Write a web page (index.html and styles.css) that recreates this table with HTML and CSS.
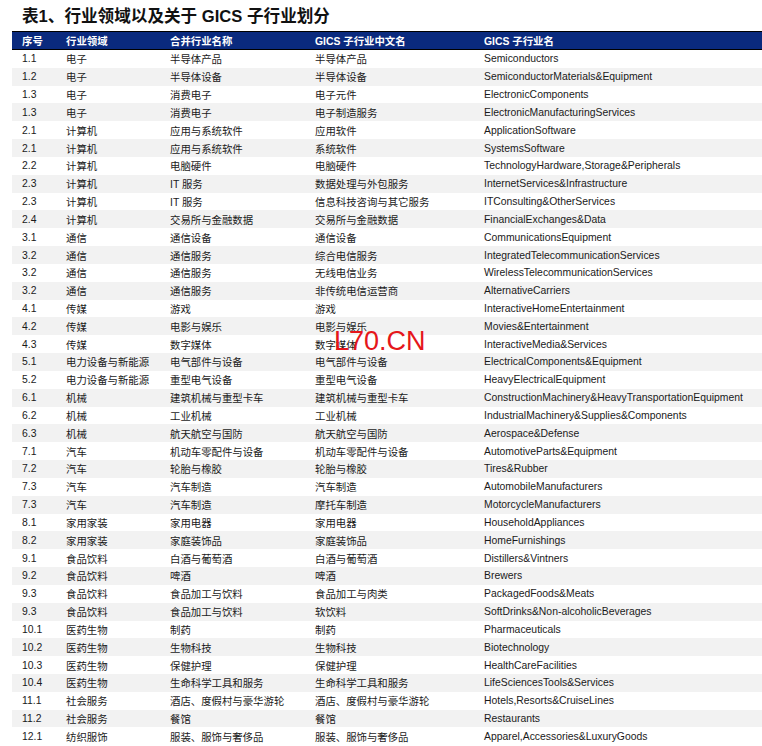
FILE: index.html
```html
<!DOCTYPE html>
<html lang="zh">
<head>
<meta charset="utf-8">
<link rel="stylesheet" href="styles.css">
</head>
<body>
<h1 class="title">表1、行业领域以及关于 GICS 子行业划分</h1>
<table class="tbl">
<colgroup><col class="c1"><col class="c2"><col class="c3"><col class="c4"><col class="c5"></colgroup>
<thead><tr><th>序号</th><th>行业领域</th><th>合并行业名称</th><th>GICS 子行业中文名</th><th>GICS 子行业名</th></tr></thead>
<tbody>
<tr><td>1.1</td><td>电子</td><td>半导体产品</td><td>半导体产品</td><td>Semiconductors</td></tr>
<tr><td>1.2</td><td>电子</td><td>半导体设备</td><td>半导体设备</td><td>SemiconductorMaterials&amp;Equipment</td></tr>
<tr><td>1.3</td><td>电子</td><td>消费电子</td><td>电子元件</td><td>ElectronicComponents</td></tr>
<tr><td>1.3</td><td>电子</td><td>消费电子</td><td>电子制造服务</td><td>ElectronicManufacturingServices</td></tr>
<tr><td>2.1</td><td>计算机</td><td>应用与系统软件</td><td>应用软件</td><td>ApplicationSoftware</td></tr>
<tr><td>2.1</td><td>计算机</td><td>应用与系统软件</td><td>系统软件</td><td>SystemsSoftware</td></tr>
<tr><td>2.2</td><td>计算机</td><td>电脑硬件</td><td>电脑硬件</td><td>TechnologyHardware,Storage&amp;Peripherals</td></tr>
<tr><td>2.3</td><td>计算机</td><td>IT 服务</td><td>数据处理与外包服务</td><td>InternetServices&amp;Infrastructure</td></tr>
<tr><td>2.3</td><td>计算机</td><td>IT 服务</td><td>信息科技咨询与其它服务</td><td>ITConsulting&amp;OtherServices</td></tr>
<tr><td>2.4</td><td>计算机</td><td>交易所与金融数据</td><td>交易所与金融数据</td><td>FinancialExchanges&amp;Data</td></tr>
<tr><td>3.1</td><td>通信</td><td>通信设备</td><td>通信设备</td><td>CommunicationsEquipment</td></tr>
<tr><td>3.2</td><td>通信</td><td>通信服务</td><td>综合电信服务</td><td>IntegratedTelecommunicationServices</td></tr>
<tr><td>3.2</td><td>通信</td><td>通信服务</td><td>无线电信业务</td><td>WirelessTelecommunicationServices</td></tr>
<tr><td>3.2</td><td>通信</td><td>通信服务</td><td>非传统电信运营商</td><td>AlternativeCarriers</td></tr>
<tr><td>4.1</td><td>传媒</td><td>游戏</td><td>游戏</td><td>InteractiveHomeEntertainment</td></tr>
<tr><td>4.2</td><td>传媒</td><td>电影与娱乐</td><td>电影与娱乐</td><td>Movies&amp;Entertainment</td></tr>
<tr><td>4.3</td><td>传媒</td><td>数字媒体</td><td>数字媒体</td><td>InteractiveMedia&amp;Services</td></tr>
<tr><td>5.1</td><td>电力设备与新能源</td><td>电气部件与设备</td><td>电气部件与设备</td><td>ElectricalComponents&amp;Equipment</td></tr>
<tr><td>5.2</td><td>电力设备与新能源</td><td>重型电气设备</td><td>重型电气设备</td><td>HeavyElectricalEquipment</td></tr>
<tr><td>6.1</td><td>机械</td><td>建筑机械与重型卡车</td><td>建筑机械与重型卡车</td><td>ConstructionMachinery&amp;HeavyTransportationEquipment</td></tr>
<tr><td>6.2</td><td>机械</td><td>工业机械</td><td>工业机械</td><td>IndustrialMachinery&amp;Supplies&amp;Components</td></tr>
<tr><td>6.3</td><td>机械</td><td>航天航空与国防</td><td>航天航空与国防</td><td>Aerospace&amp;Defense</td></tr>
<tr><td>7.1</td><td>汽车</td><td>机动车零配件与设备</td><td>机动车零配件与设备</td><td>AutomotiveParts&amp;Equipment</td></tr>
<tr><td>7.2</td><td>汽车</td><td>轮胎与橡胶</td><td>轮胎与橡胶</td><td>Tires&amp;Rubber</td></tr>
<tr><td>7.3</td><td>汽车</td><td>汽车制造</td><td>汽车制造</td><td>AutomobileManufacturers</td></tr>
<tr><td>7.3</td><td>汽车</td><td>汽车制造</td><td>摩托车制造</td><td>MotorcycleManufacturers</td></tr>
<tr><td>8.1</td><td>家用家装</td><td>家用电器</td><td>家用电器</td><td>HouseholdAppliances</td></tr>
<tr><td>8.2</td><td>家用家装</td><td>家庭装饰品</td><td>家庭装饰品</td><td>HomeFurnishings</td></tr>
<tr><td>9.1</td><td>食品饮料</td><td>白酒与葡萄酒</td><td>白酒与葡萄酒</td><td>Distillers&amp;Vintners</td></tr>
<tr><td>9.2</td><td>食品饮料</td><td>啤酒</td><td>啤酒</td><td>Brewers</td></tr>
<tr><td>9.3</td><td>食品饮料</td><td>食品加工与饮料</td><td>食品加工与肉类</td><td>PackagedFoods&amp;Meats</td></tr>
<tr><td>9.3</td><td>食品饮料</td><td>食品加工与饮料</td><td>软饮料</td><td>SoftDrinks&amp;Non-alcoholicBeverages</td></tr>
<tr><td>10.1</td><td>医药生物</td><td>制药</td><td>制药</td><td>Pharmaceuticals</td></tr>
<tr><td>10.2</td><td>医药生物</td><td>生物科技</td><td>生物科技</td><td>Biotechnology</td></tr>
<tr><td>10.3</td><td>医药生物</td><td>保健护理</td><td>保健护理</td><td>HealthCareFacilities</td></tr>
<tr><td>10.4</td><td>医药生物</td><td>生命科学工具和服务</td><td>生命科学工具和服务</td><td>LifeSciencesTools&amp;Services</td></tr>
<tr><td>11.1</td><td>社会服务</td><td>酒店、度假村与豪华游轮</td><td>酒店、度假村与豪华游轮</td><td>Hotels,Resorts&amp;CruiseLines</td></tr>
<tr><td>11.2</td><td>社会服务</td><td>餐馆</td><td>餐馆</td><td>Restaurants</td></tr>
<tr><td>12.1</td><td>纺织服饰</td><td>服装、服饰与奢侈品</td><td>服装、服饰与奢侈品</td><td>Apparel,Accessories&amp;LuxuryGoods</td></tr>
</tbody>
</table>
<div class="watermark">L70.CN</div>
</body>
</html>
```
FILE: styles.css
```css
html, body {
  margin: 0;
  padding: 0;
  background: #ffffff;
}
body {
  position: relative;
  width: 762px;
  height: 746px;
  overflow: hidden;
  font-family: "Liberation Sans", "Noto Sans CJK SC", sans-serif;
  color: #1a1a1a;
}
.title {
  margin: 0;
  padding: 5px 0 0 22px;
  height: 26px;
  font-size: 16.6px;
  line-height: 24px;
  font-weight: bold;
  color: #111;
  font-family: "Liberation Sans", "Noto Sans CJK SC", sans-serif;
}
.tbl {
  margin-left: 12px;
  width: 750px;
  border-collapse: collapse;
  table-layout: fixed;
  font-size: 10.4px;
}
.c1 { width: 44px; }
.c2 { width: 104px; }
.c3 { width: 145px; }
.c4 { width: 169px; }
.c5 { width: 288px; }
.tbl th {
  background: #0a2a7e;
  color: #ffffff;
  font-weight: bold;
  text-align: left;
  padding: 0 0 0 10px;
  height: 17px;
  border-top: 1px solid #000;
  border-bottom: 1px solid #000;
  white-space: nowrap;
}
.tbl td {
  padding: 0 0 0 10px;
  height: 17.84px;
  white-space: nowrap;
  overflow: visible;
}
.tbl tbody tr:nth-child(even) td {
  background: #f2f2f2;
}
.watermark {
  position: absolute;
  left: 334px;
  top: 326px;
  font-family: "Liberation Sans", sans-serif;
  font-size: 27px;
  line-height: 30px;
  color: #e5161b;
}
```
